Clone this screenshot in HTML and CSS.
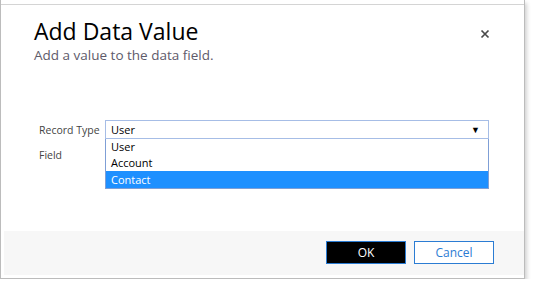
FILE: index.html
```html
<!DOCTYPE html>
<html lang="en">
<head>
    <meta charset="UTF-8">
    <meta name="viewport" content="width=device-width, initial-scale=1.0">
    <title>Add Data Value</title>
    <link rel="stylesheet" href="styles.css">
</head>
<body>
    <div class="frame">
        <div class="dialog">
            <div class="header">
                <div>
                    <h1 class="title">Add Data Value</h1>
                    <p class="subtitle">Add a value to the data field.</p>
                </div>
                <button class="close" aria-label="Close">
                    <svg width="10" height="10" viewBox="0 0 10 10">
                        <path d="M1.5 1.5 L8.5 8.5 M8.5 1.5 L1.5 8.5" stroke="#4a4a4a" stroke-width="1.7"/>
                    </svg>
                </button>
            </div>

            <div class="form">
                <div class="row">
                    <span class="label">Record Type</span>
                    <div class="select-wrap">
                        <div class="select">
                            <span>User</span>
                            <span class="arrow">&#9660;</span>
                        </div>
                        <ul class="options">
                            <li>User</li>
                            <li>Account</li>
                            <li class="active">Contact</li>
                        </ul>
                    </div>
                </div>
                <div class="row">
                    <span class="label">Field</span>
                    <div class="field-input"></div>
                </div>
            </div>

            <div class="footer">
                <button class="btn btn-ok">OK</button>
                <button class="btn btn-cancel">Cancel</button>
            </div>
        </div>
    </div>
</body>
</html>
```

FILE: styles.css
```css
body {
    margin: 0;
    font-family: "Open Sans", "Noto Sans", Arial, sans-serif;
    background-color: #ffffff;
}

.frame {
    width: 523px;
    height: 274px;
    padding-top: 4px;
    border-left: 1px solid #bcbcbc;
    border-right: 1px solid #bcbcbc;
    border-bottom: 1px solid #bcbcbc;
    box-shadow: 2px 3px 4px rgba(0, 0, 0, 0.18);
    background-color: white;
}

.dialog {
    height: 274px;
    border-top: 1px solid #d4d4d4;
    padding-bottom: 3px;
    display: flex;
    flex-direction: column;
    box-sizing: border-box;
}

.header {
    display: flex;
    justify-content: space-between;
    align-items: flex-start;
    padding: 11px 34px 0 33px;
}

.title {
    margin: 0;
    font-size: 23px;
    font-weight: normal;
    line-height: 30px;
    color: #000;
}

.subtitle {
    margin: 0;
    font-size: 13.5px;
    line-height: 19px;
    color: #5e5a6a;
}

.close {
    margin-top: 13px;
    padding: 0;
    border: none;
    background: none;
    width: 10px;
    height: 10px;
    display: flex;
}

.form {
    flex: 1;
    padding: 55px 0 0 38px;
    font-size: 11px;
    color: #444;
}

.row {
    display: flex;
    align-items: center;
    height: 19px;
    margin-bottom: 6px;
}

.label {
    width: 66px;
    font-size: 10.5px;
    white-space: nowrap;
}

.select-wrap {
    position: relative;
    width: 384px;
}

.select {
    height: 19px;
    box-sizing: border-box;
    border: 1px solid #a6bde6;
    padding: 0 8px 0 5px;
    display: flex;
    justify-content: space-between;
    align-items: center;
    color: #000;
}

.arrow {
    font-size: 9px;
}

.options {
    position: absolute;
    top: 19px;
    left: 0;
    right: 0;
    margin: 0;
    padding: 0;
    list-style: none;
    border: 1px solid #7f9fd6;
    border-top: none;
    background: white;
    color: #000;
    z-index: 2;
}

.options li {
    height: 16px;
    line-height: 16px;
    padding-left: 5px;
}

.options li.active {
    height: 17px;
    line-height: 17px;
    background-color: #1e90ff;
    color: white;
}

.field-input {
    width: 384px;
    height: 19px;
}

.footer {
    margin-left: 3px;
    height: 44px;
    background-color: #f7f7f7;
    display: flex;
    justify-content: flex-end;
    align-items: flex-start;
    gap: 8px;
    padding: 10px 30px 0 0;
    box-sizing: border-box;
}

.btn {
    width: 80px;
    height: 23px;
    font-family: inherit;
    font-size: 12px;
    border: 1px solid #2b7cd3;
    padding: 0;
    cursor: pointer;
}

.btn-ok {
    background-color: #000;
    color: #fff;
}

.btn-cancel {
    background-color: #fff;
    color: #2b7cd3;
}
```
